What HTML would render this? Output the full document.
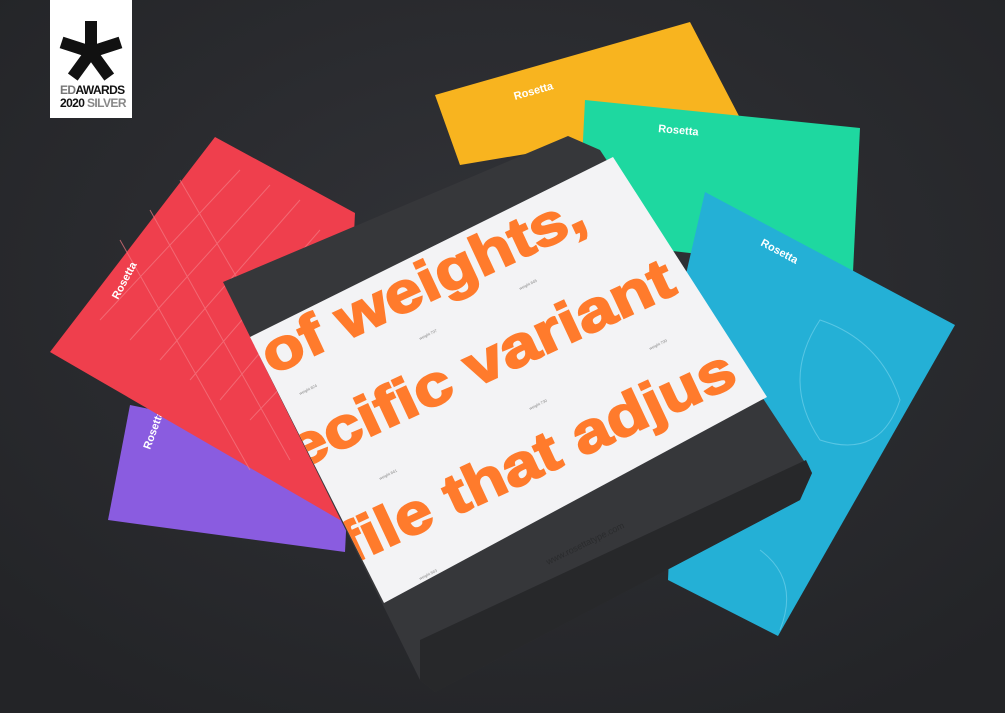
<!DOCTYPE html>
<html><head><meta charset="utf-8"><style>
html,body{margin:0;padding:0;background:#2a2b2f;}
svg{display:block}
</style></head><body>
<svg width="1005" height="713" viewBox="0 0 1005 713" xmlns="http://www.w3.org/2000/svg" font-family="Liberation Sans, sans-serif">
<defs>
<radialGradient id="bg" cx="50%" cy="40%" r="70%"><stop offset="0" stop-color="#323338"/><stop offset="1" stop-color="#232427"/></radialGradient>
<clipPath id="band"><polygon points="250,337 613,157 767,397 384,603"/></clipPath>
</defs>
<rect width="1005" height="713" fill="url(#bg)"/>
<!-- yellow -->
<polygon points="435,95 690,22 740,118 460,165" fill="#f8b41f"/>
<text x="515" y="100" fill="#fff" font-size="11" font-weight="bold" transform="rotate(-16 515 100)">Rosetta</text>
<!-- green -->
<polygon points="585,100 860,128 853,272 578,240" fill="#1ed8a0"/>
<text x="658" y="132" fill="#fff" font-size="11" font-weight="bold" transform="rotate(5 658 132)">Rosetta</text>
<!-- blue -->
<polygon points="705,192 955,325 778,636 668,580 680,300" fill="#24b0d6"/>
<text x="760" y="245" fill="#fff" font-size="11" font-weight="bold" transform="rotate(28 760 245)">Rosetta</text>
<g stroke="#6fd0ea" stroke-width="1" fill="none" opacity=".7">
<path d="M820 320 q60 20 80 80 q-20 60 -80 40 q-40 -60 0 -120z"/>
<path d="M700 420 q40 30 60 90"/><path d="M760 550 q40 30 20 80"/>
</g>
<!-- purple -->
<polygon points="130,405 350,450 345,552 108,520" fill="#8a5ce0"/>
<text x="150" y="450" fill="#fff" font-size="11" font-weight="bold" transform="rotate(-70 150 450)">Rosetta</text>
<!-- red -->
<polygon points="215,137 355,213 340,520 50,352" fill="#ef3f4d"/>
<g stroke="#f47a83" stroke-width="1" fill="none" opacity=".7">
<path d="M100 320 L240 170 M130 340 L270 185 M160 360 L300 200 M190 380 L320 230 M220 400 L330 270 M250 420 L335 330 M180 180 L320 420 M150 210 L290 460 M120 240 L250 470"/>
</g>
<text x="118" y="300" fill="#fff" font-size="11" font-weight="bold" transform="rotate(-62 118 300)">Rosetta</text>
<!-- box -->
<polygon points="223,282 568,136 600,150 812,473 800,500 435,692 420,680" fill="#36373a"/>
<polygon points="420,640 806,460 812,473 800,500 435,692 420,680" fill="#27282a"/>
<text x="548" y="565" fill="#2a2b2d" font-size="9" transform="rotate(-26 548 565)">www.rosettatype.com</text>
<!-- band -->
<polygon points="250,337 613,157 767,397 384,603" fill="#f3f3f5"/>
<g clip-path="url(#band)" fill="#ff7b2c" stroke="#ff7b2c" stroke-width="2" font-weight="bold" font-size="57" letter-spacing="0">
<text x="272" y="375" transform="rotate(-25 272 375)" textLength="350" lengthAdjust="spacingAndGlyphs">of weights,</text>
<text x="298" y="470" transform="rotate(-25 298 470)" textLength="420" lengthAdjust="spacingAndGlyphs">ecific variant</text>
<text x="350" y="565" transform="rotate(-25 350 565)" textLength="430" lengthAdjust="spacingAndGlyphs">file that adjus</text>
</g>
<g clip-path="url(#band)" fill="#888" font-size="4">
<text x="300" y="395" transform="rotate(-26 300 395)">weight 824</text>
<text x="420" y="340" transform="rotate(-26 420 340)">weight 797</text>
<text x="520" y="290" transform="rotate(-26 520 290)">weight 845</text>
<text x="380" y="480" transform="rotate(-26 380 480)">weight 841</text>
<text x="530" y="410" transform="rotate(-26 530 410)">weight 730</text>
<text x="650" y="350" transform="rotate(-26 650 350)">weight 799</text>
<text x="420" y="580" transform="rotate(-26 420 580)">weight 563</text>
<text x="600" y="490" transform="rotate(-26 600 490)">weight 745</text>
</g>
<!-- logo -->
<rect x="50" y="0" width="82" height="118" fill="#ffffff"/>
<g transform="translate(91 52)" fill="#111">
<rect x="-6" y="-31" width="12" height="30"/>
<rect x="-6" y="-31" width="12" height="30" transform="rotate(72)"/>
<rect x="-6" y="-31" width="12" height="30" transform="rotate(144)"/>
<rect x="-6" y="-31" width="12" height="30" transform="rotate(216)"/>
<rect x="-6" y="-31" width="12" height="30" transform="rotate(288)"/>
<circle r="9"/>
</g>
<text x="60" y="94" font-size="12" font-weight="bold" fill="#111" letter-spacing="-0.6"><tspan fill="#777">ED</tspan>AWARDS</text>
<text x="60" y="107" font-size="12" font-weight="bold" fill="#111" letter-spacing="-0.6">2020 <tspan fill="#888">SILVER</tspan></text>
</svg>
</body></html>
